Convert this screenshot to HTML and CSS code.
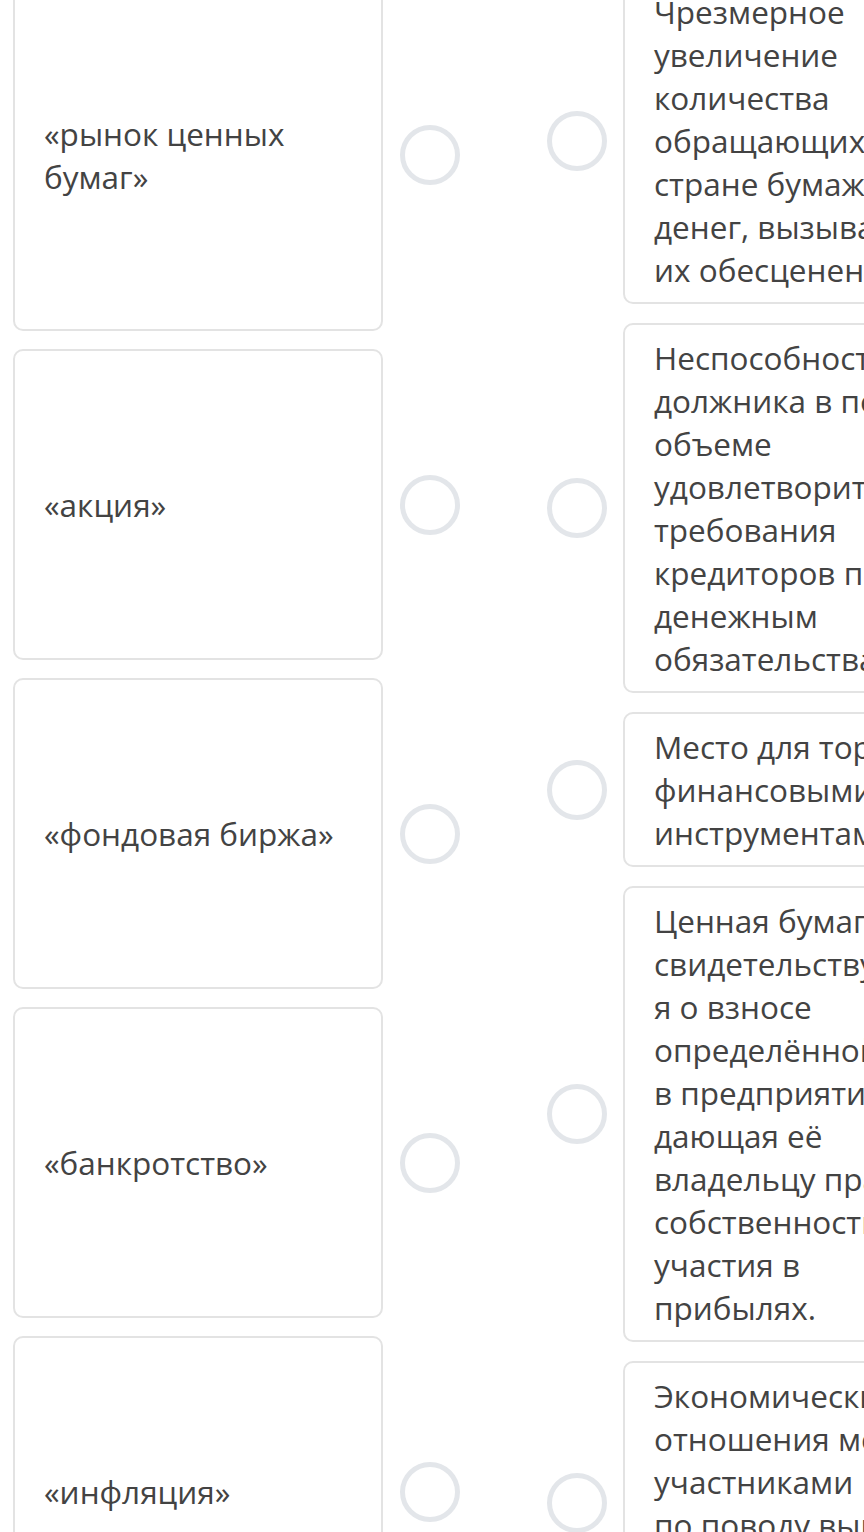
FILE: index.html
```html
<!DOCTYPE html>
<html lang="ru">
<head>
<meta charset="utf-8">
<title>Сопоставление</title>
<link rel="stylesheet" href="styles.css">
</head>
<body>
<div class="match">
  <div class="side side-left">
    <div class="row">
      <div class="card card-left card-first">«рынок ценных<br>бумаг»</div>
      <span class="radio"></span>
    </div>
    <div class="row">
      <div class="card card-left">«акция»</div>
      <span class="radio"></span>
    </div>
    <div class="row">
      <div class="card card-left">«фондовая биржа»</div>
      <span class="radio"></span>
    </div>
    <div class="row">
      <div class="card card-left">«банкротство»</div>
      <span class="radio"></span>
    </div>
    <div class="row">
      <div class="card card-left">«инфляция»</div>
      <span class="radio"></span>
    </div>
  </div>
  <div class="side side-right">
    <div class="row">
      <span class="radio"></span>
      <div class="card card-right">Чрезмерное<br>увеличение<br>количества<br>обращающихся в<br>стране бумажных<br>денег, вызывающее<br>их обесценение</div>
    </div>
    <div class="row">
      <span class="radio"></span>
      <div class="card card-right">Неспособность<br>должника в полном<br>объеме<br>удовлетворить<br>требования<br>кредиторов по<br>денежным<br>обязательствам</div>
    </div>
    <div class="row">
      <span class="radio"></span>
      <div class="card card-right">Место для торговли<br>финансовыми<br>инструментами</div>
    </div>
    <div class="row">
      <span class="radio"></span>
      <div class="card card-right">Ценная бумага,<br>свидетельствующа<br>я о взносе<br>определённой доли<br>в предприятие,<br>дающая её<br>владельцу право<br>собственности и<br>участия в<br>прибылях.</div>
    </div>
    <div class="row">
      <span class="radio"></span>
      <div class="card card-right">Экономические<br>отношения между<br>участниками<br>по поводу выпуска<br>и обращения<br>ценных бумаг</div>
    </div>
  </div>
</div>
</body>
</html>
```
FILE: styles.css
```css
html, body {
  margin: 0;
  padding: 0;
  background: #ffffff;
  overflow: hidden;
}

body {
  font-family: "Open Sans", "Noto Sans", sans-serif;
  font-size: 31.5px;
  line-height: 43px;
  color: #434343;
}

.match {
  display: flex;
  align-items: flex-start;
  margin-top: -22px;
  padding-left: 13px;
  gap: 87px;
}

.side {
  display: flex;
  flex-direction: column;
}

.side-left {
  gap: 18px;
}

.side-right {
  gap: 19px;
  margin-top: -1px;
}

.row {
  display: flex;
  align-items: center;
}

.side-left .row {
  gap: 17px;
}

.side-right .row {
  gap: 16px;
}

.card {
  box-sizing: border-box;
  border: 2px solid #e3e3e3;
  border-radius: 10px;
  background: #ffffff;
  flex: none;
}

.card-left {
  width: 370px;
  height: 311px;
  padding: 0 20px 0 29px;
  display: flex;
  align-items: center;
}

.card-left.card-first {
  height: 353px;
}

.card-right {
  width: 360px;
  padding: 11px 20px 11px 29px;
  white-space: nowrap;
}

.radio {
  box-sizing: border-box;
  width: 60px;
  height: 60px;
  border: 5px solid #e3e6ea;
  border-radius: 50%;
  flex: none;
}
```
